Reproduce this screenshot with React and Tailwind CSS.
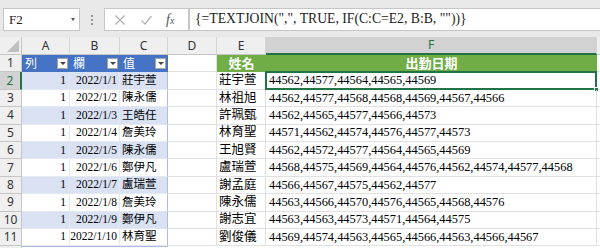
import React from "react";

const tableRows = [
  ["1", "2022/1/1", "莊宇萱"],
  ["1", "2022/1/2", "陳永儒"],
  ["1", "2022/1/3", "王皓任"],
  ["1", "2022/1/4", "詹美玲"],
  ["1", "2022/1/5", "陳永儒"],
  ["1", "2022/1/6", "鄭伊凡"],
  ["1", "2022/1/7", "盧瑞萱"],
  ["1", "2022/1/8", "詹美玲"],
  ["1", "2022/1/9", "鄭伊凡"],
  ["1", "2022/1/10", "林育聖"],
];

const results = [
  ["莊宇萱", "44562,44577,44564,44565,44569"],
  ["林祖旭", "44562,44577,44568,44568,44569,44567,44566"],
  ["許珮甄", "44562,44565,44577,44566,44573"],
  ["林育聖", "44571,44562,44574,44576,44577,44573"],
  ["王旭賢", "44562,44572,44577,44564,44565,44569"],
  ["盧瑞萱", "44568,44575,44569,44564,44576,44562,44574,44577,44568"],
  ["謝孟庭", "44566,44567,44575,44562,44577"],
  ["陳永儒", "44563,44566,44570,44576,44565,44568,44576"],
  ["謝志宜", "44563,44563,44573,44571,44564,44575"],
  ["劉俊儀", "44569,44574,44563,44565,44566,44563,44566,44567"],
];

function FilterBtn() {
  return (
    <span className="ml-auto mr-[2px] flex h-[11px] w-[11px] items-center justify-center border border-[#a6a6a6] bg-white">
      <span className="h-0 w-0 border-x-[3px] border-t-[3px] border-x-transparent border-t-[#444]" />
    </span>
  );
}

function ColHead({ w, label, active }) {
  return (
    <div
      className={`${w} ${
        active
          ? "bg-[#d2d2d2] text-[#217346] border-b-2 border-b-[#217346]"
          : "bg-[#efefef] text-[#333] border-b border-b-[#c6c6c6]"
      } flex items-center justify-center border-r border-r-[#d4d4d4] text-[12px]`}
    >
      {label}
    </div>
  );
}

export default function App() {
  return (
    <div className="flex h-[248px] w-[600px] flex-col overflow-hidden bg-[#e9e9e9] font-['Liberation_Serif','Noto_Sans_CJK_TC',serif] text-black">
      {/* formula bar */}
      <div className="flex h-[37px] shrink-0 items-start pt-[8px]">
        <div className="ml-[3px] flex h-[23px] w-[77px] items-center border border-[#c6c6c6] bg-white pl-[5px] text-[13px] text-[#222]">
          F2
          <span className="ml-auto mr-[4px] h-0 w-0 border-x-[2px] border-t-[3px] border-x-transparent border-t-[#555]" />
        </div>
        <div className="flex h-[23px] w-[24px] flex-col items-center justify-center gap-[2px]">
          <span className="h-[2px] w-[2px] bg-[#999]" />
          <span className="h-[2px] w-[2px] bg-[#999]" />
          <span className="h-[2px] w-[2px] bg-[#999]" />
        </div>
        <div className="flex h-[23px] w-[85px] items-center border border-[#c6c6c6] bg-white">
          <svg width="12" height="12" viewBox="0 0 12 12" className="ml-[9px]">
            <path d="M1.5 1.5 L10.5 10.5 M10.5 1.5 L1.5 10.5" stroke="#b0b0b0" strokeWidth="1.2" fill="none" />
          </svg>
          <svg width="13" height="12" viewBox="0 0 13 12" className="ml-[14px]">
            <path d="M1.5 6.5 L5 10 L11.5 2" stroke="#b0b0b0" strokeWidth="1.2" fill="none" />
          </svg>
          <span className="ml-[13px] text-[14px] italic text-[#555]">
            f<span className="text-[10px]">x</span>
          </span>
        </div>
        <div className="flex h-[23px] flex-1 items-center border border-r-0 border-[#c6c6c6] bg-white pl-[5px] text-[13.7px] text-[#222]">
          {'{=TEXTJOIN(",", TRUE, IF(C:C=E2, B:B, ""))}'}
        </div>
      </div>

      {/* column headers */}
      <div className="flex h-[18px] shrink-0 font-['Noto_Sans',sans-serif]">
        <div className="relative w-[22px] border-r border-b border-[#c6c6c6] bg-[#efefef]">
          <span className="absolute bottom-[2px] right-[2px] h-0 w-0 border-b-[12px] border-l-[12px] border-b-[#c0c0c0] border-l-transparent" />
        </div>
        <ColHead w="w-[48px]" label="A" />
        <ColHead w="w-[50px]" label="B" />
        <ColHead w="w-[48px]" label="C" />
        <ColHead w="w-[49px]" label="D" />
        <ColHead w="w-[49px]" label="E" />
        <ColHead w="w-[331px]" label="F" active />
        <div className="flex-1 border-b border-[#c6c6c6] bg-[#efefef]" />
      </div>

      {/* row 1: table headers */}
      <div className="flex h-[17.4px] shrink-0 bg-white">
        <div className="flex w-[22px] items-center justify-center border-r border-b border-[#c6c6c6] bg-[#efefef] font-['Noto_Sans',sans-serif] text-[12px] text-[#333]">
          1
        </div>
        <div className="flex w-[48px] items-center bg-[#4472c4] pl-[3px] text-[12px] text-white">
          列<FilterBtn />
        </div>
        <div className="flex w-[50px] items-center bg-[#4472c4] pl-[3px] text-[12px] text-white">
          欄<FilterBtn />
        </div>
        <div className="flex w-[48px] items-center bg-[#4472c4] pl-[3px] text-[12px] text-white">
          值<FilterBtn />
        </div>
        <div className="w-[49px] border-r border-b border-[#e1e1e1]" />
        <div className="flex w-[49px] items-center justify-center bg-[#70ad47] text-[13px] font-bold text-white">
          姓名
        </div>
        <div className="flex w-[331px] items-center justify-center bg-[#70ad47] text-[13px] font-bold text-white">
          出勤日期
        </div>
        <div className="flex-1 border-b border-[#e1e1e1]" />
      </div>

      {tableRows.map((r, i) => {
        const banded = i % 2 === 0;
        const active = i === 0;
        const fill = banded ? "bg-[#d9e1f2]" : "bg-white";
        return (
          <div key={i} className="flex h-[17.4px] shrink-0 bg-white">
            <div
              className={`${
                active ? "bg-[#d2d2d2] text-[#217346] border-r-2 border-r-[#217346]" : "bg-[#efefef] text-[#333] border-r border-r-[#c6c6c6]"
              } flex w-[22px] items-center justify-center border-b border-b-[#c6c6c6] font-['Noto_Sans',sans-serif] text-[12px]`}
            >
              {i + 2}
            </div>
            <div className={`${fill} flex w-[48px] items-center justify-end border-r border-b border-[#e4e8f0] pr-[3px] text-[11.5px]`}>
              {r[0]}
            </div>
            <div className={`${fill} flex w-[50px] items-center justify-end border-r border-b border-[#e4e8f0] pr-[2px] text-[11.5px]`}>
              {r[1]}
            </div>
            <div className={`${fill} flex w-[48px] items-center border-r border-r-[#a9bde3] border-b border-b-[#e4e8f0] pl-[2px] text-[11.5px]`}>
              {r[2]}
            </div>
            <div className="w-[49px] border-r border-b border-[#e1e1e1]" />
            <div className="flex w-[49px] items-center border-r border-b border-[#e1e1e1] pl-[2px] text-[12.5px]">
              {results[i][0]}
            </div>
            <div className="relative flex w-[331px] items-center border-r border-b border-[#e1e1e1] pl-[3px] text-[12.4px]">
              {results[i][1]}
              {active && (
                <span className="absolute -left-[1px] -top-[1px] bottom-[-1px] right-[-1px] border-2 border-[#217346]">
                  <span className="absolute -bottom-[4px] -right-[4px] h-[5px] w-[5px] border border-white bg-[#217346]" />
                </span>
              )}
            </div>
            <div className="flex-1 border-b border-[#e1e1e1]" />
          </div>
        );
      })}
      <div className="flex h-[17.4px] shrink-0 bg-white">
        <div className="w-[22px] border-r border-[#c6c6c6] bg-[#efefef]" />
        <div className="w-[146px] border-t border-[#a9bde3] bg-white" />
        <div className="flex-1" />
      </div>
    </div>
  );
}
